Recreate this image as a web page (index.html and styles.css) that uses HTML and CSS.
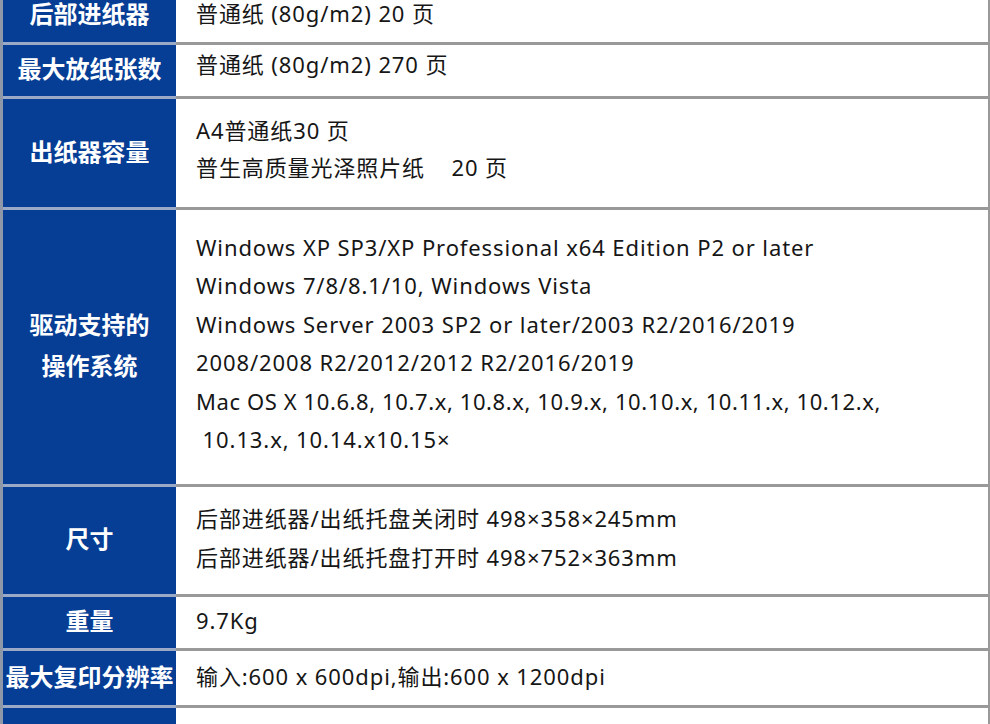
FILE: index.html
```html
<!DOCTYPE html>
<html lang="zh-CN">
<head>
<meta charset="utf-8">
<title>规格</title>
<link rel="stylesheet" href="styles.css">
</head>
<body>
<div class="spec">
  <div class="row r1">
    <div class="key">后部进纸器</div>
    <div class="val">普通纸 (80g/m2) 20 页</div>
  </div>
  <div class="row r2">
    <div class="key">最大放纸张数</div>
    <div class="val">普通纸 (80g/m2) 270 页</div>
  </div>
  <div class="row r3">
    <div class="key">出纸器容量</div>
    <div class="val"><div>A4普通纸30 页</div><div>普生高质量光泽照片纸&nbsp;&nbsp;&nbsp; 20 页</div></div>
  </div>
  <div class="row r4">
    <div class="key"><div>驱动支持的</div><div>操作系统</div></div>
    <div class="val">
      <div>Windows XP SP3/XP Professional x64 Edition P2 or later</div>
      <div>Windows 7/8/8.1/10, Windows Vista</div>
      <div>Windows Server 2003 SP2 or later/2003 R2/2016/2019</div>
      <div>2008/2008 R2/2012/2012 R2/2016/2019</div>
      <div class="mac">Mac OS X 10.6.8, 10.7.x, 10.8.x, 10.9.x, 10.10.x, 10.11.x, 10.12.x,</div>
      <div>&nbsp;10.13.x, 10.14.x10.15×</div>
    </div>
  </div>
  <div class="row r5">
    <div class="key">尺寸</div>
    <div class="val"><div>后部进纸器/出纸托盘关闭时 498×358×245mm</div><div>后部进纸器/出纸托盘打开时 498×752×363mm</div></div>
  </div>
  <div class="row r6">
    <div class="key">重量</div>
    <div class="val">9.7Kg</div>
  </div>
  <div class="row r7">
    <div class="key">最大复印分辨率</div>
    <div class="val">输入:600 x 600dpi,输出:600 x 1200dpi</div>
  </div>
  <div class="row r8">
    <div class="key"></div>
    <div class="val"></div>
  </div>
</div>
</body>
</html>
```

FILE: styles.css
```css
html, body {
  margin: 0;
  padding: 0;
  background: #ffffff;
  overflow: hidden;
}
.spec {
  width: 990px;
  height: 740px;
  margin-top: -12px;
  box-sizing: border-box;
  border-left: 3px solid #8f98a8;
  border-right: 2px solid #999999;
  font-family: "Noto Sans", "Noto Sans CJK SC", sans-serif;
}
.row {
  display: grid;
  grid-template-columns: 173px 1fr;
}
.key, .val {
  display: flex;
  flex-direction: column;
  justify-content: center;
  box-sizing: border-box;
  padding-bottom: 4px;
}
.key {
  background: #063d95;
  color: #ffffff;
  font-weight: 700;
  font-size: 24px;
  line-height: 41px;
  align-items: center;
  text-align: center;
  border-bottom: 3px solid #9aa9c6;
  white-space: nowrap;
}
.val {
  color: #161616;
  font-size: 22px;
  letter-spacing: 0.9px;
  line-height: 38.5px;
  padding-left: 20px;
  border-bottom: 3px solid #999999;
  white-space: nowrap;
}
.mac { letter-spacing: 0.6px; }
.r1 { height: 57px; }
.r2 { height: 54px; }
.r2 .val { padding-bottom: 12px; }
.r3 { height: 111px; }
.r3 .val { line-height: 37px; padding-bottom: 9px; }
.r4 { height: 277px; }
.r4 .val { padding-bottom: 8px; }
.r5 { height: 110px; }
.r5 .val { padding-bottom: 6px; }
.r6 { height: 54px; }
.r7 { height: 57px; }
.r8 { height: 40px; }
.r8 .key, .r8 .val { border-bottom: none; }
```
